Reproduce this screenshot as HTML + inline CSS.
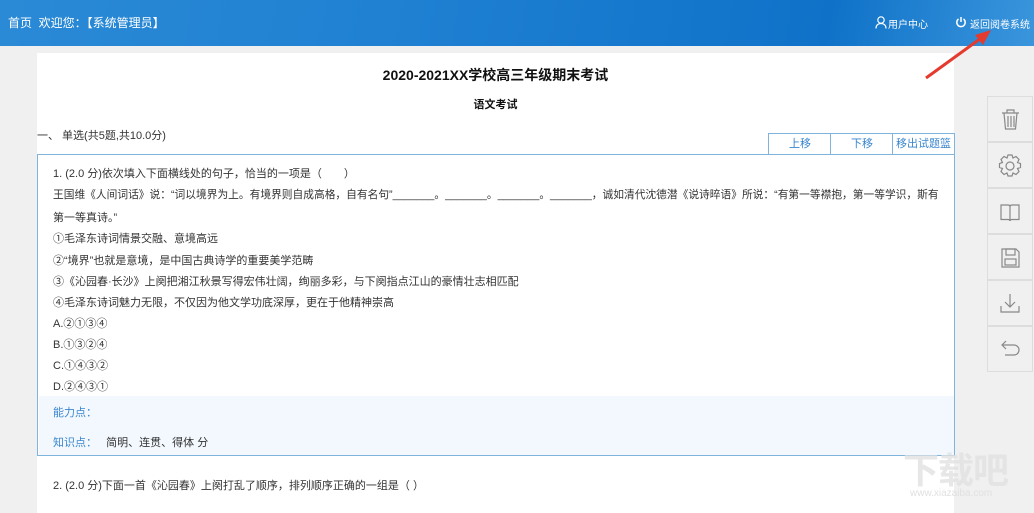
<!DOCTYPE html><html><head><meta charset="utf-8"><style>
body{margin:0;width:1034px;height:501px;overflow:hidden;background:#f0f0f0;font-family:"Liberation Sans","Noto Sans CJK SC",sans-serif;color:#333;position:relative}
.hdr{position:absolute;left:0;top:0;width:1034px;height:46px;background:linear-gradient(100deg,#2a8ad6 0%,#1f80d2 40%,#0f72c8 80%,#3a95dc 100%);color:#fff;font-size:12px}
.a{position:absolute;white-space:nowrap}
.paper{position:absolute;left:37px;top:53px;width:917px;height:460px;background:#fff}
.box{position:absolute;left:37px;top:154px;width:916px;height:300px;border:1px solid #7fb4de;background:#fff}
.lb{position:absolute;left:1px;top:241px;width:915px;height:59px;background:#f3f8fe}
.q{font-size:11px;color:#333}
.btn{position:absolute;top:133px;height:20px;border:1px solid #7fb4de;color:#3a86cf;font-size:11px;text-align:center;line-height:20px;background:#fff}
.tb{position:absolute;left:987px;width:46px;height:46px;border:1px solid #ddd;background:#f0f0f0;box-sizing:border-box}
</style></head><body>
<div class="hdr">
<div class="a" style="left:8px;top:14px">首页&nbsp; 欢迎您：【系统管理员】</div>
<svg class="a" style="left:875px;top:16px" width="12" height="13" viewBox="0 0 12 13"><circle cx="6" cy="4" r="3.2" fill="none" stroke="#fff" stroke-width="1.2"/><path d="M1 12.5c0-3.5 2.2-5 5-5s5 1.5 5 5" fill="none" stroke="#fff" stroke-width="1.2"/></svg>
<div class="a" style="left:888px;top:16px;font-size:10px">用户中心</div>
<svg class="a" style="left:955px;top:16px" width="12" height="12" viewBox="0 0 12 12"><path d="M3.5 3A4.2 4.2 0 1 0 8.5 3" fill="none" stroke="#fff" stroke-width="1.5"/><path d="M6 1v5" stroke="#fff" stroke-width="1.5"/></svg>
<div class="a" style="left:970px;top:16px;font-size:10px">返回阅卷系统</div>
</div>
<div class="paper"></div>
<svg class="a" style="left:920px;top:26px" width="75" height="56"><path d="M6 52L64 10" stroke="#e53a2e" stroke-width="3"/><path d="M71 4L55 9L63 19Z" fill="#e53a2e"/></svg>
<div class="a" style="left:0;width:991px;text-align:center;top:65px;font-size:14px;font-weight:bold;color:#111">2020-2021XX学校高三年级期末考试</div>
<div class="a" style="left:0;width:991px;text-align:center;top:96px;font-size:11px;font-weight:bold;color:#111">语文考试</div>
<div class="a" style="left:37px;top:127px;font-size:11px">一、 单选(共5题,共10.0分)</div>
<div class="box"><div class="lb"></div></div>
<div class="btn" style="left:768px;width:62px">上移</div>
<div class="btn" style="left:830px;width:62px">下移</div>
<div class="btn" style="left:892px;width:61px">移出试题篮</div>
<div class="q">
<div class="a" style="left:53px;top:165px">1. (2.0 分)依次填入下面横线处的句子，恰当的一项是（　　）</div>
<div class="a" style="left:53px;top:186px;transform:scaleX(0.975);transform-origin:0 0">王国维《人间词话》说：“词以境界为上。有境界则自成高格，自有名句”_______。_______。_______。_______，诚如清代沈德潜《说诗晬语》所说：“有第一等襟抱，第一等学识，斯有</div>
<div class="a" style="left:53px;top:209px">第一等真诗。”</div>
<div class="a" style="left:53px;top:230px">①毛泽东诗词情景交融、意境高远</div>
<div class="a" style="left:53px;top:252px">②“境界”也就是意境，是中国古典诗学的重要美学范畴</div>
<div class="a" style="left:53px;top:273px">③《沁园春·长沙》上阕把湘江秋景写得宏伟壮阔，绚丽多彩，与下阕指点江山的豪情壮志相匹配</div>
<div class="a" style="left:53px;top:294px">④毛泽东诗词魅力无限，不仅因为他文学功底深厚，更在于他精神崇高</div>
<div class="a" style="left:53px;top:315px">A.②①③④</div>
<div class="a" style="left:53px;top:336px">B.①③②④</div>
<div class="a" style="left:53px;top:357px">C.①④③②</div>
<div class="a" style="left:53px;top:378px">D.②④③①</div>
<div class="a" style="left:53px;top:404px;color:#3a86cf">能力点：</div>
<div class="a" style="left:53px;top:434px"><span style="color:#3a86cf">知识点：</span>&nbsp;&nbsp; 简明、连贯、得体 分</div>
<div class="a" style="left:53px;top:477px">2. (2.0 分)下面一首《沁园春》上阕打乱了顺序，排列顺序正确的一组是（ ）</div>
</div>
<div class="tb" style="top:96px"><svg width="44" height="44"><g fill="none" stroke="#888" stroke-width="1.2"><path d="M14 16h17M19 16v-3h7v3M16 16l1.5 16h10l1.5-16M20 19v11M23 19v11M26 19v11"/></g></svg></div>
<div class="tb" style="top:142px"><svg width="44" height="44"><g fill="none" stroke="#888" stroke-width="1.2"><circle cx="22" cy="23" r="4"/><path d="M20 12h4l1 3 3-1.5 3 3-1.5 3 3 1v4l-3 1 1.5 3-3 3-3-1.5-1 3h-4l-1-3-3 1.5-3-3 1.5-3-3-1v-4l3-1-1.5-3 3-3 3 1.5z"/></g></svg></div>
<div class="tb" style="top:188px"><svg width="44" height="44"><g fill="none" stroke="#888" stroke-width="1.2"><path d="M13 16h7q2 0 2 2v14q0-1.5-2-1.5h-7zM31 16h-7q-2 0-2 2v14q0-1.5 2-1.5h7z"/></g></svg></div>
<div class="tb" style="top:234px"><svg width="44" height="44"><g fill="none" stroke="#888" stroke-width="1.2"><path d="M14 14h14l3 3v15h-17z"/><rect x="18" y="14" width="9" height="6"/><rect x="17" y="24" width="11" height="6"/></g></svg></div>
<div class="tb" style="top:280px"><svg width="44" height="44"><g fill="none" stroke="#888" stroke-width="1.2"><path d="M22 13v13M17 21l5 5 5-5M13 25v6h18v-6"/></g></svg></div>
<div class="tb" style="top:326px"><svg width="44" height="44"><g fill="none" stroke="#888" stroke-width="1.2"><path d="M15 18h11a5 5 0 0 1 0 10h-9M18 14l-4 4 4 4"/></g></svg></div>
<div class="a" style="left:903px;top:442px;font-size:36px;color:rgba(225,225,225,0.8);font-weight:bold;letter-spacing:-1px">下载吧</div>
<div class="a" style="left:910px;top:488px;font-size:10px;color:#e0e0e0">www.xiazaiba.com</div>
</body></html>
